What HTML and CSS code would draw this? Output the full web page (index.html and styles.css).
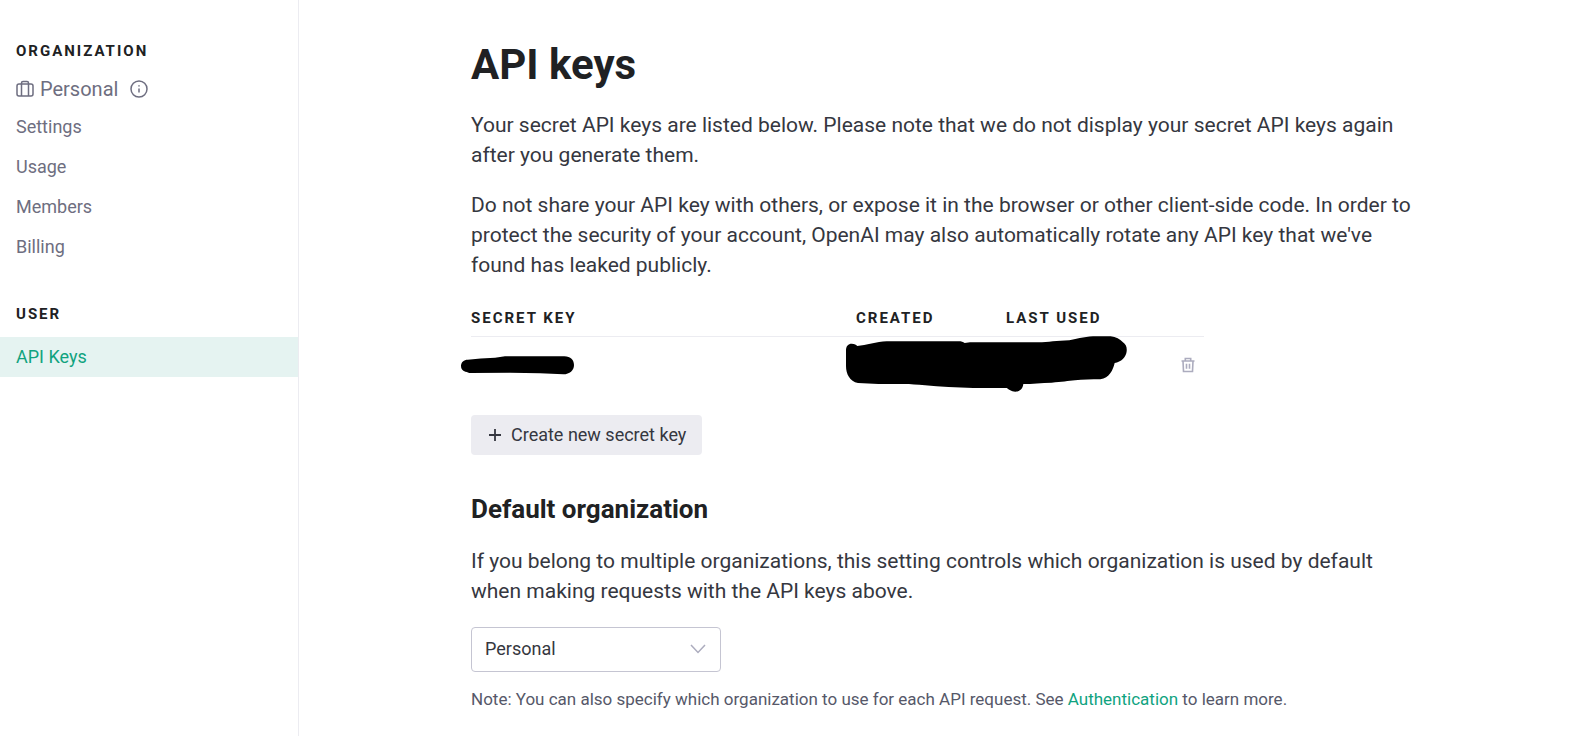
FILE: index.html
```html
<!DOCTYPE html>
<html lang="en">
<head>
<meta charset="utf-8">
<meta name="viewport" content="width=device-width, initial-scale=1">
<title>API keys</title>
<link rel="stylesheet" href="styles.css">
</head>
<body>
<div class="layout">
  <nav class="sidebar" aria-label="Account">
    <h2 class="side-heading">Organization</h2>
    <div class="org">
      <svg class="org-icon" viewBox="0 0 18 18" aria-hidden="true"><rect x="1" y="4" width="16" height="12" rx="2"/><path d="M5.500 16V3q0-1.500 1.500-1.500h4q1.500 0 1.500 1.500v13"/></svg>
      <span class="org-name">Personal</span>
      <button class="info" type="button" aria-label="About this organization">
        <svg class="info-icon" viewBox="0 0 18 18" aria-hidden="true"><circle cx="9" cy="9" r="8"/><path d="M9 8.500v4M9 5.200v1.400"/></svg>
      </button>
    </div>
    <a class="side-link" href="#settings">Settings</a>
    <a class="side-link" href="#usage">Usage</a>
    <a class="side-link" href="#members">Members</a>
    <a class="side-link" href="#billing">Billing</a>
    <h2 class="side-heading side-heading-user">User</h2>
    <a class="side-link side-link-active" href="#api-keys" aria-current="page">API Keys</a>
  </nav>
  <main class="main">
    <div class="content">
      <h1 class="title">API keys</h1>
      <p class="text">Your secret API keys are listed below. Please note that we do not display your secret API keys again after you generate them.</p>
      <p class="text">Do not share your API key with others, or expose it in the browser or other client-side code. In order to protect the security of your account, OpenAI may also automatically rotate any API key that we've found has leaked publicly.</p>
      <table class="keys">
        <thead>
          <tr><th class="col-key" scope="col">Secret key</th><th class="col-date" scope="col">Created</th><th class="col-date" scope="col">Last used</th><td class="col-action"></td></tr>
        </thead>
        <tbody>
          <tr>
            <td class="cell"><svg class="mark-key" viewBox="30 156 348 72" aria-hidden="true"><path d="M53 176Q90 171 135 170L165 166H343C362 166 372 178 372 192C372 208 359 220 340 220L270 217L180 215L62 216C55 216 53 213 46 212C37 210 33 203 33 195C33 183 42 176 53 176Z"/></svg></td>
            <td class="cell"><svg class="mark-dates" viewBox="39 96 864 180" aria-hidden="true"><path d="M48 147C48 135 55 128 65 128C74 128 79 131 82 135C108 134 140 121 170 121H385C395 121 399 123 404 126L420 124H625C655 124 680 119 718 118C748 112 770 106 800 106H842C858 107 870 115 878 123C889 131 891 140 890 151C889 168 873 184 854 186C849 207 838 231 811 235C785 235 758 235 735 238C715 240 695 243 665 245C635 246 606 249 580 249C578 264 569 272 556 272C543 272 537 265 530 261H430C380 260 330 257 285 253C260 251 244 249 220 249H145L84 246C59 242 48 218 48 195Z"/></svg></td>
            <td class="cell"></td>
            <td class="cell cell-action"><button class="delete" type="button" aria-label="Delete key"><svg class="delete-icon" viewBox="0 0 16 16" aria-hidden="true"><path d="M1.500 4h13M5.300 4V1.500h5.400V4M3 4l.5 10.500h9L13 4M6.500 6.700v5M9.500 6.700v5"/></svg></button></td>
          </tr>
        </tbody>
      </table>
      <button class="create" type="button"><svg class="plus" viewBox="0 0 14 14" aria-hidden="true"><path d="M7 1v12M1 7h12"/></svg>Create new secret key</button>
      <h2 class="subtitle">Default organization</h2>
      <p class="text">If you belong to multiple organizations, this setting controls which organization is used by default when making requests with the API keys above.</p>
      <div class="picker">
        <select class="select" aria-label="Default organization"><option>Personal</option></select>
        <svg class="chevron" viewBox="0 0 16 10" aria-hidden="true"><path d="M1 1l7 7.500L15 1"/></svg>
      </div>
      <p class="note">Note: You can also specify which organization to use for each API request. See <a class="link" href="#authentication">Authentication</a> to learn more.</p>
    </div>
  </main>
</div>
</body>
</html>
```
FILE: styles.css
```css
* { box-sizing: border-box; }
body {
  margin: 0;
  background: #fff;
  color: #353740;
  font-family: Roboto, "Liberation Sans", sans-serif;
  font-size: 20px;
  line-height: 30px;
}
svg { fill: none; stroke: currentColor; }
button { font: inherit; color: inherit; border: 0; background: none; padding: 0; cursor: pointer; }
.layout { display: flex; min-height: 100vh; }
.sidebar {
  flex: 0 0 299px;
  padding-top: 41px;
  border-right: 1px solid #ececf1;
  color: #6e6e80;
}
.side-heading {
  margin: 0;
  padding: 0 16px;
  color: #202123;
  font-size: 15px;
  font-weight: 700;
  line-height: 20px;
  letter-spacing: 2px;
  text-transform: uppercase;
}
.side-heading-user { padding-top: 37px; padding-bottom: 13px; }
.org { display: flex; align-items: center; height: 30px; margin-top: 13px; padding: 0 16px; }
.org-icon { width: 18px; height: 18px; margin-right: 6px; stroke-width: 1.5; }
.org-name { margin-right: 12px; }
.info { display: flex; }
.info-icon { width: 18px; height: 18px; stroke-width: 1.5; }
.side-link {
  display: block;
  padding: 5px 16px;
  color: inherit;
  font-size: 18px;
  text-decoration: none;
}
.org + .side-link { margin-top: 3px; }
.side-link-active { background: #e5f3f1; color: #10a37f; }
.main { flex: 1; min-width: 0; padding: 40px 155px 20px 172px; }
.content { max-width: 944px; }
.title { margin: 0 0 20px; color: #202123; font-size: 42px; font-weight: 700; line-height: 50px; }
.text { margin: 0 0 20px; font-size: 21px; }
.keys { width: 733px; max-width: 100%; table-layout: fixed; border-collapse: collapse; }
.keys th {
  padding: 8px 0;
  color: #202123;
  font-size: 15px;
  font-weight: 700;
  line-height: 20px;
  letter-spacing: 2px;
  text-align: left;
  text-transform: uppercase;
}
.keys thead tr { border-bottom: 1px solid #ececf1; }
.col-key { width: 385px; }
.col-date { width: 150px; }
.cell { position: relative; height: 56px; padding: 0; }
.cell-action { padding-right: 7px; }
.mark-key, .mark-dates { position: absolute; fill: #000; stroke: none; }
.mark-key { top: 16px; left: -11px; width: 116px; height: 24px; }
.mark-dates { top: -4px; left: -13px; width: 288px; height: 60px; }
.delete { display: flex; margin-left: auto; padding: 1px; color: #acacbe; }
.delete-icon { width: 16px; height: 16px; stroke-width: 1.6; }
.create {
  display: flex;
  align-items: center;
  gap: 9px;
  height: 40px;
  margin-top: 22px;
  padding: 0 16px 0 17px;
  border-radius: 4px;
  background: #ececf1;
  font-size: 18px;
}
.plus { width: 14px; height: 14px; stroke-width: 1.8; }
.subtitle { margin: 39px 0 22px; color: #202123; font-size: 26px; font-weight: 700; line-height: 30px; }
.picker { position: relative; width: 250px; margin-top: 21px; }
.select {
  appearance: none;
  display: block;
  width: 100%;
  height: 45px;
  padding: 0 40px 0 13px;
  border: 1px solid #c5c5d2;
  border-radius: 4px;
  background: #fff;
  color: #353740;
  font: inherit;
  font-size: 18px;
}
.chevron { position: absolute; top: 17px; right: 15px; width: 16px; height: 10px; color: #acacbe; stroke-width: 1.5; pointer-events: none; }
.note { margin: 15px 0 0; color: #565869; font-size: 17px; line-height: 25px; }
.link { color: #10a37f; text-decoration: none; }
```
